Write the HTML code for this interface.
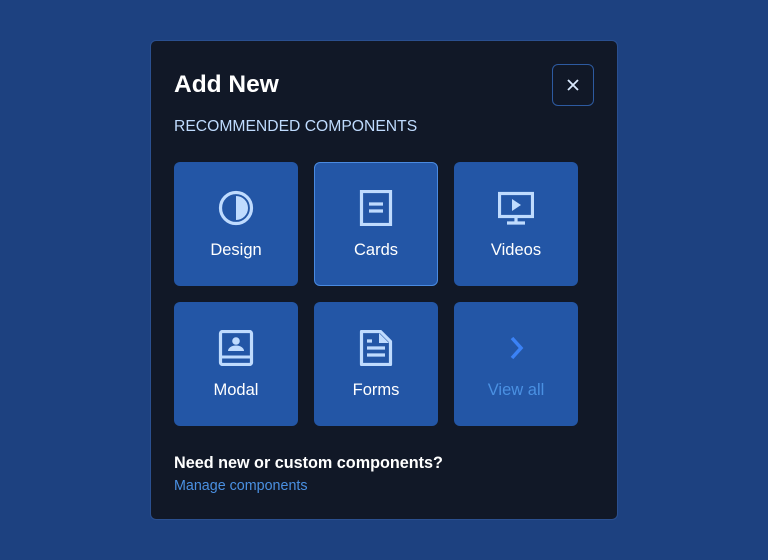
<!DOCTYPE html>
<html><head><style>
body{margin:0;width:768px;height:560px;background:#1d4180;font-family:"Liberation Sans",sans-serif;position:relative;overflow:hidden}
.m{position:absolute;left:150px;top:40px;width:466px;height:478px;background:#111827;border:1px solid #2a4f8f;border-radius:6px}
h1{position:absolute;left:23px;top:30px;margin:0;font-size:24.5px;color:#fff;font-weight:bold}
.x{position:absolute;left:401px;top:23px;width:40px;height:40px;border:1px solid #2d5aa0;border-radius:6px}
.sub{position:absolute;left:23px;top:77px;font-size:15.7px;color:#bfdbfe}
.t{position:absolute;width:124px;height:124px;background:#2356a6;border-radius:6px;color:#fff;font-size:16.5px;text-align:center;box-sizing:border-box}
.t svg{position:absolute;left:44px;top:28px}
.t span{position:absolute;left:0;right:0;top:79px}
.q{position:absolute;left:23px;top:413px;font-size:16.2px;font-weight:bold;color:#fff}
.a{position:absolute;left:23px;top:437px;font-size:14.3px;color:#4a90e2}
</style></head><body>
<div class="m">
<h1>Add New</h1>
<div class="x"><svg width="40" height="40" viewBox="0 0 40 40"><path d="M15 15l10 10M25 15l-10 10" stroke="#dbeafe" stroke-width="1.8"/></svg></div>
<div class="sub">RECOMMENDED COMPONENTS</div>
<div class="t" style="left:23px;top:121px"><svg width="36" height="36" viewBox="0 0 36 36"><circle cx="18" cy="18" r="15.5" fill="none" stroke="#bfdbfe" stroke-width="3.2"/><path d="M18 6 A12 12 0 0 1 18 30Z" fill="#bfdbfe"/></svg><span>Design</span></div>
<div class="t" style="left:163px;top:121px;border:1px solid #4a8ae0"><svg width="36" height="36" viewBox="0 0 36 36" style="left:43px;top:27px"><rect x="3.5" y="1.5" width="29" height="33" fill="none" stroke="#bfdbfe" stroke-width="3.2"/><path d="M11 14h14M11 21h14" stroke="#bfdbfe" stroke-width="3.2"/></svg><span style="top:78px">Cards</span></div>
<div class="t" style="left:303px;top:121px"><svg width="36" height="36" viewBox="0 0 36 36"><rect x="1.5" y="3.5" width="33" height="23" fill="none" stroke="#bfdbfe" stroke-width="3.2"/><path d="M14 9v12l9-6z" fill="#bfdbfe"/><path d="M18 26v6M9 33h18" stroke="#bfdbfe" stroke-width="3.2"/></svg><span>Videos</span></div>
<div class="t" style="left:23px;top:261px"><svg width="36" height="36" viewBox="0 0 36 36"><rect x="2.5" y="1.5" width="31" height="33" rx="2" fill="none" stroke="#bfdbfe" stroke-width="3.2"/><path d="M3 27h30" stroke="#bfdbfe" stroke-width="3"/><circle cx="18" cy="11" r="3.8" fill="#bfdbfe"/><path d="M10 21a8 5.5 0 0 1 16 0z" fill="#bfdbfe"/></svg><span>Modal</span></div>
<div class="t" style="left:163px;top:261px"><svg width="36" height="36" viewBox="0 0 36 36"><path d="M3.5 1.5h19l10 10v23h-29z" fill="none" stroke="#bfdbfe" stroke-width="3.2" stroke-linejoin="round"/><path d="M21 3v10h10z" fill="#bfdbfe"/><path d="M9 11h5M9 18h18M9 25h18" stroke="#bfdbfe" stroke-width="3.2"/></svg><span>Forms</span></div>
<div class="t" style="left:303px;top:261px;color:#4a90e2"><svg width="36" height="36" viewBox="0 0 36 36"><path d="M14 8l9 10-9 10" fill="none" stroke="#3b82f6" stroke-width="3.5"/></svg><span>View all</span></div>
<div class="q">Need new or custom components?</div>
<div class="a">Manage components</div>
</div>
</body></html>
